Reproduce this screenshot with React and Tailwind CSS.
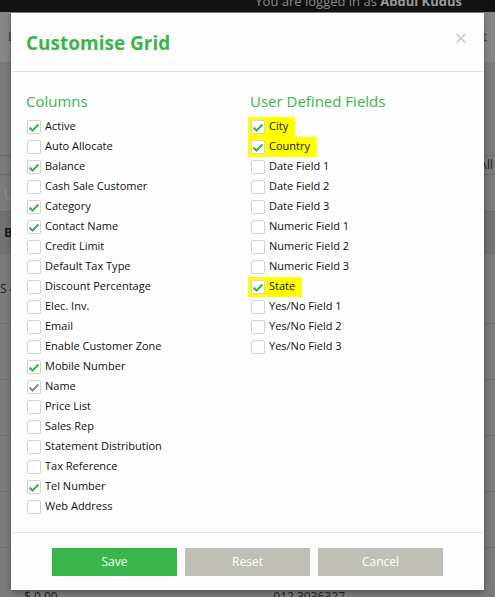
import React from 'react';

const columns = [
  ['Active', 'on'],
  ['Auto Allocate', ''],
  ['Balance', 'on'],
  ['Cash Sale Customer', ''],
  ['Category', 'on'],
  ['Contact Name', 'on'],
  ['Credit Limit', ''],
  ['Default Tax Type', ''],
  ['Discount Percentage', ''],
  ['Elec. Inv.', ''],
  ['Email', ''],
  ['Enable Customer Zone', ''],
  ['Mobile Number', 'on'],
  ['Name', 'locked'],
  ['Price List', ''],
  ['Sales Rep', ''],
  ['Statement Distribution', ''],
  ['Tax Reference', ''],
  ['Tel Number', 'on'],
  ['Web Address', ''],
];

const userFields = [
  ['City', 'on', true],
  ['Country', 'on', true],
  ['Date Field 1', ''],
  ['Date Field 2', ''],
  ['Date Field 3', ''],
  ['Numeric Field 1', ''],
  ['Numeric Field 2', ''],
  ['Numeric Field 3', ''],
  ['State', 'on', true],
  ['Yes/No Field 1', ''],
  ['Yes/No Field 2', ''],
  ['Yes/No Field 3', ''],
];

function Check({ state }) {
  const stroke = state === 'locked' ? '#8a8a8a' : '#3fae49';
  return (
    <span className="w-[14px] h-[14px] shrink-0 rounded-[2px] border border-[#d2d2d2] bg-white flex items-center justify-center">
      {state && (
        <svg width="12" height="12" viewBox="0 0 12 12">
          <path d="M1.5 6.5 L4.5 9.5 L10.5 3.5" fill="none" stroke={stroke} strokeWidth="2" />
        </svg>
      )}
    </span>
  );
}

function Row({ label, state, mark }) {
  return (
    <div className="h-[20px] flex items-center">
      <div className={`flex items-center gap-[4px] h-[20px] pr-[7px] ${mark ? 'bg-[#ffff00] -ml-[3px] pl-[3px]' : ''}`}>
        <Check state={state} />
        <span className="text-[11px] text-[#111]">{label}</span>
      </div>
    </div>
  );
}

export default function App() {
  return (
    <div className="relative w-[495px] h-[597px] overflow-hidden bg-[#7b7b7b] font-['Open_Sans',sans-serif]">
      {/* page behind the overlay */}
      <div className="h-[12px] bg-[#121212] flex justify-end pr-[33px]">
        <span className="-mt-[8px] text-[13px] leading-[18px] text-[#8a8a8a]">
          You are logged in as <b className="text-[#9a9a9a]">Abdul Kudus</b>
        </span>
      </div>
      <div className="h-[50px] bg-[#868686] flex items-center justify-between px-[8px] text-[13px] text-[#3a3a3a]">
        <span>B</span>
        <span>ist</span>
      </div>
      <div className="h-[94px] border-b border-[#6a6a6a]" />
      <div className="h-[18px] flex justify-end pr-[2px] text-[12px] text-[#222]">All</div>
      <div className="h-[38px] border-y border-[#6a6a6a] flex items-center px-[4px] text-[14px] text-[#8f8f8f]">U</div>
      <div className="h-[42px] bg-[#727272] flex items-center px-[4px] text-[13px] font-bold text-[#1a1a1a]">B</div>
      <div className="h-[70px] border-b border-[#6f6f6f] flex items-center text-[12px] text-[#222]">S 4</div>
      <div className="h-[56px] border-b border-[#6f6f6f]" />
      <div className="h-[56px] border-b border-[#6f6f6f]" />
      <div className="h-[56px] border-b border-[#6f6f6f]" />
      <div className="h-[56px] border-b border-[#6f6f6f]" />
      <div className="h-[56px] flex items-end justify-between pl-[24px] pr-[150px] text-[12px] leading-[14px] text-[#1a1a1a]">
        <span>$ 0.00</span>
        <span>012 3036327</span>
      </div>

      {/* modal */}
      <div className="absolute left-[11px] top-[13px] w-[473px] h-[577px] bg-[#fdfdfd] shadow-[0_2px_6px_rgba(0,0,0,0.35)] flex flex-col">
        <div className="h-[59px] px-[15px] flex items-center justify-between border-b border-[#e3e3e3]">
          <h1 className="text-[19px] font-bold text-[#3ab54a] pt-[2px]">Customise Grid</h1>
          <span className="text-[22px] leading-none text-[#c8c8c8] -mt-[10px] mr-[2px]">×</span>
        </div>
        <div className="flex-1 flex px-[15px] pt-[18px] border-b border-[#e3e3e3]">
          <div className="w-[224px]">
            <h2 className="text-[15px] text-[#3ab54a] mb-[4px]">Columns</h2>
            <div className="pl-[1px]">
              {columns.map(([l, s]) => <Row key={l} label={l} state={s} />)}
            </div>
          </div>
          <div className="flex-1">
            <h2 className="text-[15px] text-[#3ab54a] mb-[4px]">User Defined Fields</h2>
            <div className="pl-[1px]">
              {userFields.map(([l, s, m]) => <Row key={l} label={l} state={s} mark={m} />)}
            </div>
          </div>
        </div>
        <div className="h-[57px] flex items-center justify-center gap-[8px]">
          <button className="w-[125px] h-[28px] bg-[#39b54a] text-white text-[12px]">Save</button>
          <button className="w-[125px] h-[28px] bg-[#bfbfb7] text-white text-[12px]">Reset</button>
          <button className="w-[125px] h-[28px] bg-[#bfbfb7] text-white text-[12px]">Cancel</button>
        </div>
      </div>
    </div>
  );
}
